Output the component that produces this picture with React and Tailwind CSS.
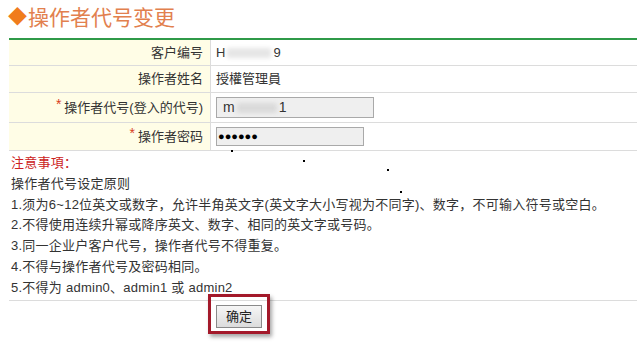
const font = { fontFamily: '"Liberation Sans", Arial, "Noto Sans CJK SC", sans-serif' }

// ── FORM ROW ──────────────────────────────────────────────
const Row = ({ label, required, children, h }) => (
  <div className={`flex border-b border-[#dcdcdc] ${h}`}>
    <div className="w-[202px] flex-shrink-0 bg-[#fffde6] border-r border-[#dcdcdc] flex items-center justify-end pr-[7px] text-[13px] text-[#333]">
      {required && <span className="text-[#d83c1c] text-[14px] mr-[3px] -mt-[6px]">*</span>}
      {label}
    </div>
    <div className="flex-1 flex items-center pl-[5px] text-[13px] text-[#333]">
      {children}
    </div>
  </div>
)

const notes = [
  '操作者代号设定原则',
  '1.须为6~12位英文或数字，允许半角英文字(英文字大小写视为不同字)、数字，不可输入符号或空白。',
  '2.不得使用连续升幂或降序英文、数字、相同的英文字或号码。',
  '3.同一企业户客户代号，操作者代号不得重复。',
  '4.不得与操作者代号及密码相同。',
  '5.不得为 admin0、admin1 或 admin2',
]

export default function App() {
  return (
    <div className="relative w-[637px] h-[343px] bg-white overflow-hidden" style={font}>
      {/* TITLE */}
      <div className="h-[38px] pl-[8px] pt-[3px] flex items-start text-[21px] leading-[30px]">
        <span className="text-[#f07c1c] text-[19px] mr-[1px]">◆</span>
        <span className="text-[#e2804e]">操作者代号变更</span>
      </div>

      {/* FORM TABLE */}
      <div className="ml-[9px] border-t-2 border-[#2f9a48]">
        <Row label="客户编号" h="h-[26px]">
          <span>H</span>
          <span className="inline-block w-[44px] h-[10px] mx-[2px] bg-[#e6e6e6] blur-[2px]" />
          <span>9</span>
        </Row>
        <Row label="操作者姓名" h="h-[27px]">授權管理員</Row>
        <Row label="操作者代号(登入的代号)" required h="h-[30px]">
          <div className="w-[158px] h-[21px] bg-[#efefef] border border-[#a9a9a9] flex items-center pl-[6px] text-[14px]">
            <span>m</span>
            <span className="inline-block w-[40px] h-[10px] mx-[2px] bg-[#dadada] blur-[2px]" />
            <span>1</span>
          </div>
        </Row>
        <Row label="操作者密码" required h="h-[28px]">
          <div className="w-[148px] h-[19px] bg-[#efefef] border border-[#a9a9a9] flex items-center pl-[1px] text-[11px] text-black">
            ●●●●●●
          </div>
        </Row>
      </div>

      {/* NOTES */}
      <div className="pl-[11px] pt-[2px] text-[13px] leading-[20.8px] tracking-[0.25px] text-[#333]">
        <p className="text-[#cc2222]">注意事項：</p>
        {notes.map((n) => (
          <p key={n}>{n}</p>
        ))}
      </div>

      {/* FOOTER */}
      <div className="ml-[9px] mt-[1px] border-t border-[#dcdcdc] flex justify-start pl-[199px]">
        <div className="-mt-[7px] border-[3px] border-[#a3192a] px-[5px] pt-[7px] pb-[3px] shadow-[2px_3px_4px_rgba(0,0,0,0.35)]">
          <button className="w-[46px] h-[23px] text-[13px] text-[#222] border border-[#8a8a8a] bg-gradient-to-b from-[#f6f6f6] to-[#dcdcdc]">
            确定
          </button>
        </div>
      </div>

      {/* stray dots */}
      <span className="absolute left-[231px] top-[150px] w-[2px] h-[2px] bg-black" />
      <span className="absolute left-[303px] top-[160px] w-[2px] h-[2px] bg-black" />
      <span className="absolute left-[387px] top-[169px] w-[2px] h-[2px] bg-black" />
      <span className="absolute left-[400px] top-[191px] w-[2px] h-[2px] bg-black" />
    </div>
  )
}
